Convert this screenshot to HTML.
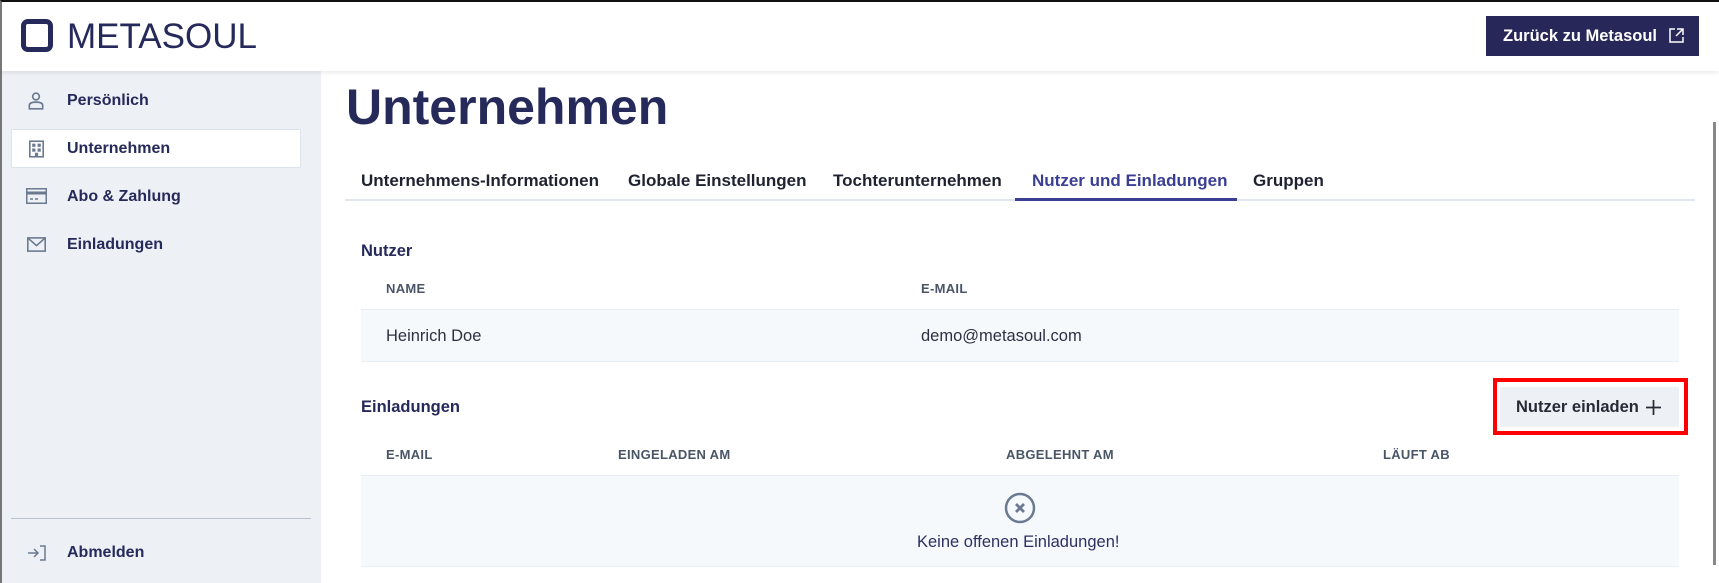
<!DOCTYPE html>
<html><head><meta charset="utf-8"><style>
*{box-sizing:border-box;margin:0;padding:0}
body{width:1719px;height:583px;overflow:hidden;background:#fff;font-family:"Liberation Sans",sans-serif;color:#262a5a;position:relative}
.abs{position:absolute}
.hdr{left:0;top:0;width:1719px;height:71px;background:#fff;border-top:2px solid #111;border-left:2px solid #777;box-shadow:0 2px 4px rgba(0,0,0,.08);z-index:2}
.side{left:0;top:71px;width:321px;height:512px;background:#edf1f5;border-left:2px solid #777}
.nav{position:absolute;left:65px;font-size:16px;font-weight:bold;color:#262a5a;line-height:20px}
.ico{position:absolute}
.tab{position:absolute;top:171px;line-height:20px;font-size:17px;font-weight:bold;color:#1f2230}
.cap{position:absolute;font-size:13px;font-weight:bold;color:#4a5568;letter-spacing:.3px;line-height:16px}
.lbl{position:absolute;left:361px;font-size:16.5px;font-weight:bold;color:#262a5a;line-height:20px}
.txt{position:absolute;font-size:16.5px;color:#2d3040;line-height:20px}
</style></head><body>
<div class="abs hdr">
  <div class="abs" style="left:19px;top:17px;width:32px;height:33px;border:5px solid #262a5a;border-radius:7px"></div>
  <div class="abs" style="left:65px;top:15px;font-size:35px;line-height:40px;color:#262a5a;letter-spacing:0px">METASOUL</div>
  <div class="abs" style="left:1484px;top:14px;width:213px;height:40px;background:#272859;color:#fff;font-size:16.5px;font-weight:bold;padding:10px 0 0 17px;line-height:20px">Zurück zu Metasoul
    <svg style="position:absolute;left:183px;top:12px" width="15" height="15" viewBox="0 0 15 15" fill="none" stroke="#fff" stroke-width="1.5"><path d="M6 1H1v13h13V9"/><path d="M8 1h6v6M14 1L7 8"/></svg>
  </div>
</div>
<div class="abs side">
  <svg class="ico" style="left:24px;top:20px" width="20" height="20" viewBox="0 0 18 18" fill="none" stroke="#6b7a90" stroke-width="1.5"><circle cx="9" cy="5" r="3"/><path d="M3 16v-3c0-2 2-3 6-3s6 1 6 3v3z"/></svg>
  <div class="nav" style="top:20px">Persönlich</div>
  <div class="abs" style="left:9px;top:58px;width:290px;height:39px;background:#fff;border:1px solid #dde3ea"></div>
  <svg class="ico" style="left:27px;top:69px" width="15" height="18" viewBox="0 0 14 16"><rect x="0.75" y="0.75" width="12.5" height="14.5" fill="none" stroke="#6b7a90" stroke-width="1.5"/><rect x="3" y="3" width="3" height="3" fill="#6b7a90"/><rect x="8" y="3" width="3" height="3" fill="#6b7a90"/><rect x="3" y="7.5" width="3" height="3" fill="#6b7a90"/><rect x="8" y="7.5" width="3" height="3" fill="#6b7a90"/><rect x="5.5" y="11.5" width="3" height="4" fill="#6b7a90"/></svg>
  <div class="nav" style="top:68px">Unternehmen</div>
  <svg class="ico" style="left:24px;top:117px" width="21" height="16" viewBox="0 0 21 16" fill="none" stroke="#6b7a90" stroke-width="1.5"><rect x="0.75" y="0.75" width="19.5" height="14.5"/><path d="M1 5h19" stroke-width="3"/><path d="M4 11h3M9 11h3"/></svg>
  <div class="nav" style="top:116px">Abo &amp; Zahlung</div>
  <svg class="ico" style="left:25px;top:166px" width="19" height="15" viewBox="0 0 18 14" fill="none" stroke="#6b7a90" stroke-width="1.5"><rect x="0.75" y="0.75" width="16.5" height="12.5"/><path d="M1 1l8 7 8-7"/></svg>
  <div class="nav" style="top:164px">Einladungen</div>
  <div class="abs" style="left:9px;top:447px;width:300px;height:1px;background:#b8c2cf"></div>
  <svg class="ico" style="left:25px;top:474px" width="20" height="16" viewBox="0 0 20 16" fill="none" stroke="#6b7a90" stroke-width="1.5"><path d="M1 8h10M7 4l4 4-4 4M13 1h5v14h-5"/></svg>
  <div class="nav" style="top:472px">Abmelden</div>
</div>
<div class="abs" style="left:346px;top:79px;font-size:50px;line-height:56px;font-weight:bold;color:#262a5a">Unternehmen</div>
<div class="abs" style="left:345px;top:199px;width:1350px;height:2px;background:#e2e6ee"></div>
<div class="tab" style="left:361px">Unternehmens-Informationen</div>
<div class="tab" style="left:628px">Globale Einstellungen</div>
<div class="tab" style="left:833px">Tochterunternehmen</div>
<div class="tab" style="left:1032px;color:#3b3f93">Nutzer und Einladungen</div>
<div class="abs" style="left:1015px;top:198px;width:222px;height:3px;background:#3b3f93"></div>
<div class="tab" style="left:1253px">Gruppen</div>

<div class="lbl" style="top:241px">Nutzer</div>
<div class="cap" style="left:386px;top:281px">NAME</div>
<div class="cap" style="left:921px;top:281px">E-MAIL</div>
<div class="abs" style="left:361px;top:309px;width:1318px;height:53px;background:#f6f9fc;border-top:1px solid #e8edf3;border-bottom:1px solid #e8edf3"></div>
<div class="txt" style="left:386px;top:326px">Heinrich Doe</div>
<div class="txt" style="left:921px;top:326px">demo@metasoul.com</div>

<div class="lbl" style="top:397px">Einladungen</div>
<div class="abs" style="left:1493px;top:378px;width:195px;height:57px;border:4px solid #f00"></div>
<div class="abs" style="left:1500px;top:387px;width:179px;height:40px;background:#edf1f5;font-size:16.5px;font-weight:bold;color:#262a35;padding:10px 0 0 16px;line-height:20px">Nutzer einladen
  <svg style="position:absolute;left:146px;top:13px" width="15" height="15" viewBox="0 0 14 14" stroke="#262a35" stroke-width="1.6"><path d="M7 0v14M0 7h14"/></svg>
</div>
<div class="cap" style="left:386px;top:447px">E-MAIL</div>
<div class="cap" style="left:618px;top:447px">EINGELADEN AM</div>
<div class="cap" style="left:1006px;top:447px">ABGELEHNT AM</div>
<div class="cap" style="left:1383px;top:447px">LÄUFT AB</div>
<div class="abs" style="left:361px;top:475px;width:1318px;height:92px;background:#f6f9fc;border-top:1px solid #e8edf3;border-bottom:1px solid #e8edf3"></div>
<svg class="abs" style="left:1004px;top:492px" width="32" height="32" viewBox="0 0 32 32" fill="none" stroke="#6b7a90"><circle cx="16" cy="16" r="14" stroke-width="2.5"/><path d="M12 12l8 8M20 12l-8 8" stroke-width="2.8"/></svg>
<div class="abs" style="left:917px;top:532px;font-size:16.5px;line-height:20px;color:#2d3060">Keine offenen Einladungen!</div>
<div class="abs" style="left:1713px;top:122px;width:3px;height:443px;background:#888"></div>
</body></html>
